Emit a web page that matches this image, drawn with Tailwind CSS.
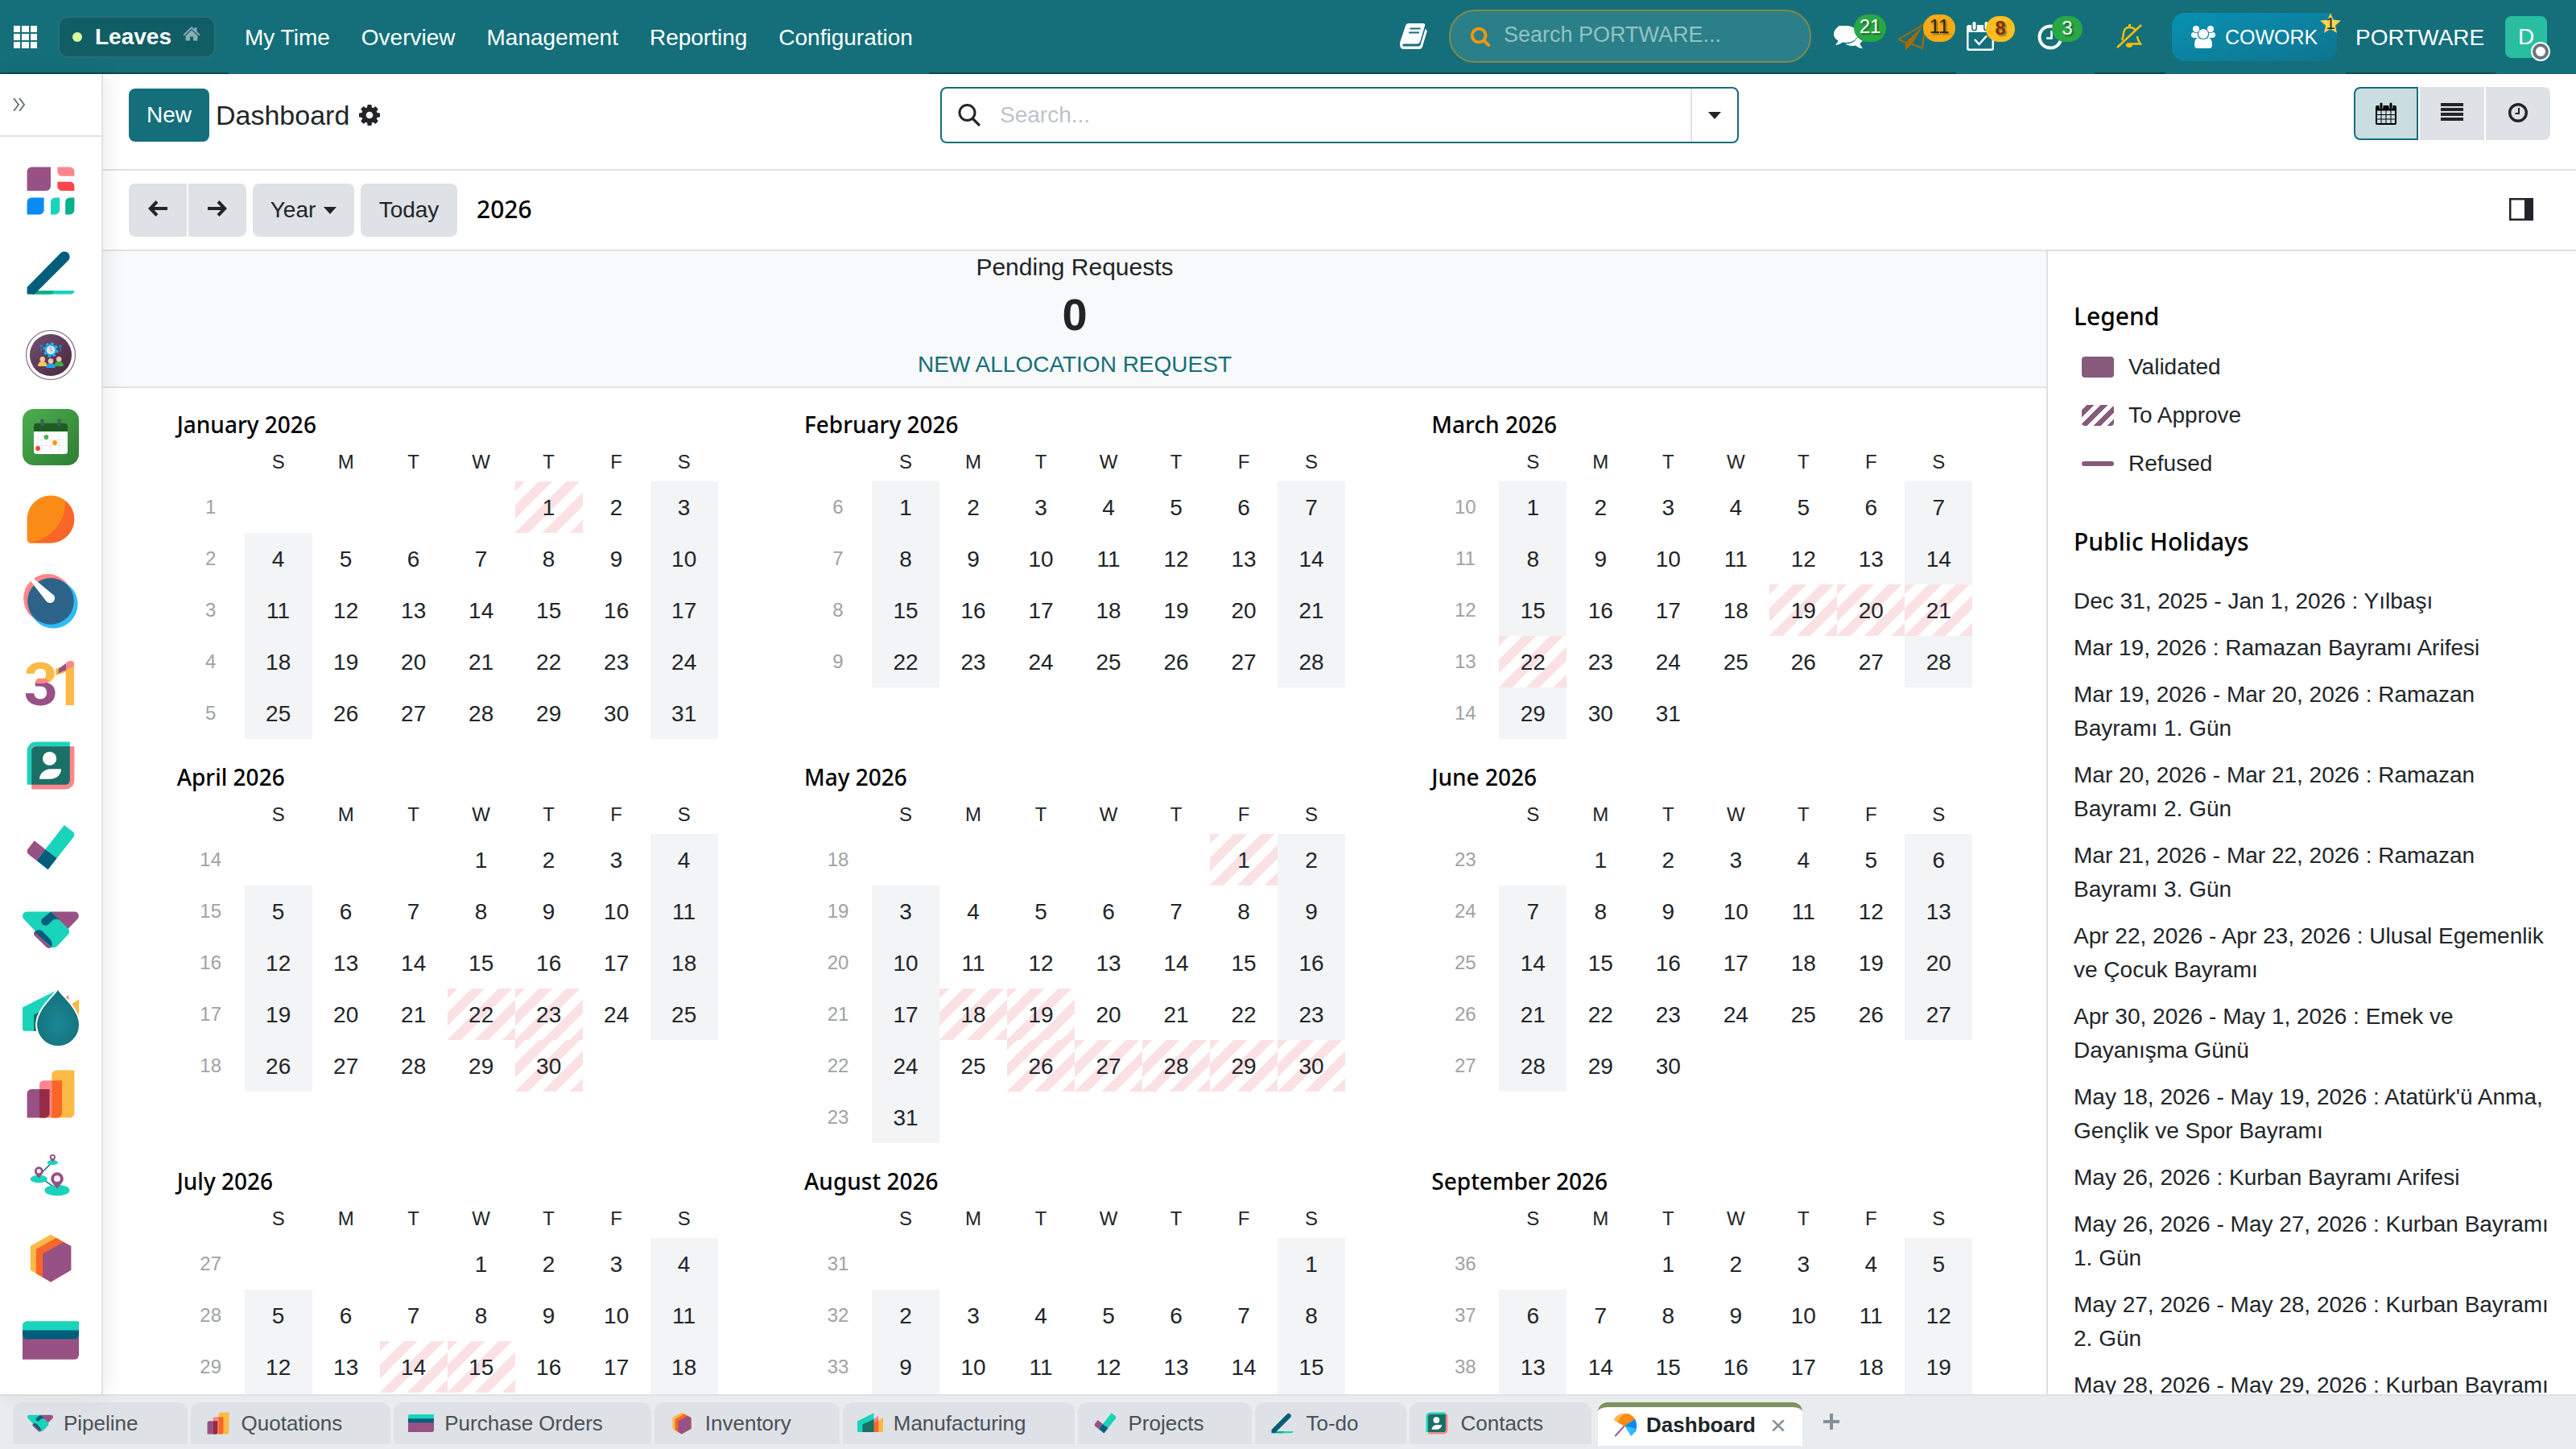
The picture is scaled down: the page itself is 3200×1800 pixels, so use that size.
<!DOCTYPE html>
<html lang="en">
<head>
<meta charset="utf-8">
<title>Leaves - Dashboard</title>
<script src="https://cdn.jsdelivr.net/npm/@tailwindcss/browser@4"></script>
</head>
<body class="h-screen flex flex-col overflow-hidden bg-white text-[28px] leading-[42px] text-[#212529] font-['Liberation_Sans',Arial,sans-serif]">

<svg class="absolute size-0" aria-hidden="true">
  <defs>
    <linearGradient id="g-plum" x1="0" y1="0" x2="1" y2="1"><stop offset="0" stop-color="#755070"/><stop offset="1" stop-color="#452640"/></linearGradient>
    <linearGradient id="g-green" x1="0" y1="0" x2="1" y2="1"><stop offset="0" stop-color="#4caf50"/><stop offset="1" stop-color="#2e7d32"/></linearGradient>
    <linearGradient id="g-three" gradientUnits="userSpaceOnUse" x1="0" y1="6" x2="0" y2="44"><stop offset=".48" stop-color="#fbb945"/><stop offset=".48" stop-color="#985184"/></linearGradient>
    <radialGradient id="g-drop" cx=".5" cy=".6" r=".6"><stop offset="0" stop-color="#1a8796"/><stop offset="1" stop-color="#146f7a"/></radialGradient>
    <clipPath id="c-dial"><circle cx="23" cy="23" r="22.3"/></clipPath>
  </defs>

  <symbol id="i-search" viewBox="0 0 1792 1792"><path fill="currentColor" d="M1216 832q0-185-131.500-316.500t-316.500-131.500-316.500 131.500-131.500 316.500 131.500 316.500 316.500 131.500 316.500-131.500 131.500-316.500zm512 832q0 52-38 90t-90 38q-54 0-90-38l-343-342q-179 124-399 124-143 0-273.500-55.500t-225-150-150-225-55.500-273.500 55.500-273.500 150-225 225-150 273.500-55.500 273.500 55.500 225 150 150 225 55.500 273.500q0 220-124 399l343 343q37 37 37 90z"/></symbol>

  <symbol id="app-dashboards" viewBox="0 0 50 50">
    <path fill="#985184" d="M8 4h17v17a4 4 0 0 1-4 4H4V8a4 4 0 0 1 4-4z"/>
    <path fill="#fc868b" d="M31 4h11a4 4 0 0 1 4 4v4H35a4 4 0 0 1-4-4z"/>
    <path fill="#f9464c" d="M31 17h11a4 4 0 0 1 4 4v4H35a4 4 0 0 1-4-4z"/>
    <path fill="#088bf5" d="M8 31h11v11a4 4 0 0 1-4 4H4V35a4 4 0 0 1 4-4z"/>
    <path fill="#1ad3bb" d="M29 31h4v11a4 4 0 0 1-4 4h-4V35a4 4 0 0 1 4-4z"/>
    <path fill="#05b08a" d="M42 31h4v11a4 4 0 0 1-4 4h-4V35a4 4 0 0 1 4-4z"/>
  </symbol>
  <symbol id="app-todo" viewBox="0 0 50 50">
    <path fill="#1ad3bb" d="M25 40.700h21a3.300 3.300 0 0 1-3.300 3.300H8z"/>
    <path fill="#05b08a" d="M10 40.700h18a3.300 3.300 0 0 1-3.300 3.300H8z"/>
    <path fill="#005e7a" d="M4 37.600 34.200 7A4.800 4.800 0 0 1 41 13.600L10.500 44H4z"/>
  </symbol>
  <symbol id="app-hr" viewBox="0 0 50 50">
    <circle cx="25" cy="25" r="21.800" fill="#fff" stroke="#7d5f7b" stroke-width=".8"/>
    <circle cx="25" cy="25" r="18.600" fill="url(#g-plum)"/>
    <circle cx="25" cy="20.500" r="5.600" fill="none" stroke="#18b4f2" stroke-width="2.200" stroke-dasharray="2.400 2"/>
    <circle cx="25" cy="20.500" r="5.200" fill="#18b4f2"/><circle cx="25" cy="20.500" r="3.800" fill="#dfe3e8"/>
    <path d="M25 18v2.600l1.600 1" fill="none" stroke="#7c8894" stroke-width=".7"/>
    <path d="M16.500 22.500v-6m-1.200 1.400 1.200-1.600 1.200 1.600M33.500 22.500v-6m-1.200 1.400 1.200-1.600 1.200 1.600" fill="none" stroke="#1c87c0" stroke-width=".9"/>
    <circle cx="17.700" cy="28.700" r="2.300" fill="#f3c7a2"/><circle cx="32.300" cy="28.700" r="2.300" fill="#f3c7a2"/>
    <path fill="#fdc653" d="M13.700 35c0-3 1.500-4.300 4-4.300s4 1.300 4 4.300z"/><path fill="#3fae49" d="M28.300 35c0-3 1.500-4.300 4-4.300s4 1.300 4 4.300z"/>
    <path fill="#18a5ec" d="M21 36.500c0-3 1.500-4.300 4-4.300s4 1.300 4 4.300z"/><circle cx="25" cy="30.300" r="2.300" fill="#f3c7a2"/>
  </symbol>
  <symbol id="app-planner" viewBox="0 0 50 50">
    <rect width="50" height="50" rx="10" fill="url(#g-green)"/>
    <rect x="10" y="12.400" width="30" height="27.600" rx="2.500" fill="#fff"/>
    <path fill="#1b5e20" d="M12.500 12.400h25a2.500 2.500 0 0 1 2.500 2.500V20H10v-5.100a2.500 2.500 0 0 1 2.500-2.500z"/>
    <path fill="#455a64" d="M16 9.500q1.500-1.300 3 0V15h-3zM31 9.500q1.500-1.300 3 0V15h-3z"/>
    <path stroke="#e3e5e7" stroke-width=".6" d="M12.500 27.500h25M12.500 32.500h25M17.500 22.500v15M25 22.500v15M32.500 22.500v15"/>
    <circle cx="21" cy="25" r="2.100" fill="#4caf50"/><circle cx="28.600" cy="30" r="2.100" fill="#ff9800"/><circle cx="13.600" cy="35" r="2.100" fill="#f44336"/>
  </symbol>
  <symbol id="app-discuss" viewBox="0 0 50 50">
    <path fill="#fa8b16" d="M4 25a21 21 0 1 1 21 21H7a3 3 0 0 1-3-3z"/>
    <path fill="#f96628" d="M37.900 8.600C38.500 30 22 44 6 45.800L7 46h18a21 21 0 0 0 12.900-37.400z"/>
  </symbol>
  <symbol id="app-timer" viewBox="0 0 50 50">
    <circle cx="22.400" cy="22.400" r="21.600" fill="#fc868b"/><circle cx="27.400" cy="27.400" r="21.600" fill="#2ebcfa"/>
    <circle cx="25" cy="24.900" r="20.600" fill="#2d6388"/>
    <path fill="#fff" d="M7.300 7.200 21 24.800a4.300 4.300 0 1 0 5-6.600L10 4.900z"/>
  </symbol>
  <symbol id="app-calendar" viewBox="0 0 50 50">
    <text x="1" y="44" font-family="Roboto" font-weight="700" font-size="53" fill="url(#g-three)">3</text>
    <text x="25" y="44" font-family="Roboto" font-weight="700" font-size="53" fill="#fbb945">1</text>
    <path fill="#985184" d="m31.500 16 .8-4.200 6.600-5.100V13z"/>
    <path fill="#fc868b" d="M38.900 6.500q7-4.500 7 3l-7 3.500zM12.500 25v-3q0-1.500 2-1.500h5l4 2-4 2.500z"/>
  </symbol>
  <symbol id="app-contacts" viewBox="0 0 50 50">
    <path fill="#1ad3bb" d="M12 4h30v38H4V12a8 8 0 0 1 8-8z"/>
    <path fill="#fc868b" d="M8 8h38v30a8 8 0 0 1-8 8H8z"/>
    <path fill="#1a6f66" d="M12 8h30v30a4 4 0 0 1-4 4H8V12a4 4 0 0 1 4-4z"/>
    <circle cx="24" cy="18.800" r="6.100" fill="#fff"/><path fill="#fff" d="M15 37c0-5 4.500-9 10-9h9.300c0 5-4.300 9-10 9z"/>
  </symbol>
  <symbol id="app-project" viewBox="0 0 50 50">
    <path fill="#985184" d="m10.500 18.800 9.700 7.600-7.800 10L5.500 31a3.800 3.800 0 0 1-.7-5z"/>
    <path fill="#1ad3bb" d="m37 5 7.500 5.800a3.800 3.800 0 0 1 .7 5L30.500 34.300l-10.300-7.900z"/>
    <path fill="#005e7a" d="m20.200 26.400 10.300 7.900-7.900 10.200-10.200-8.100z"/>
  </symbol>
  <symbol id="app-crm" viewBox="0 0 50 50">
    <path fill="#985184" d="M25 9h21c3.600 0 5.200 4 2.700 6.500l-8.400 8.800zM14 24.500 26 37l-1 4c-1.500.5-3 .2-4.200-1L11 30.300c-1.700-1.700-1.500-4.300 3-5.800z"/>
    <path fill="#1ad3bb" d="M4 9h21.200l15 15q2.600 2.700 0 5.400L31 39.200q-3.700 3.500-7.400 0L1.200 15.500C-1.300 13 .4 9 4 9z"/>
    <path fill="#985184" d="M10 27.500 25.500 40.500q-2.500 1.800-4.700-.5L11 30.300q-1.200-1.300-1-2.800z"/>
    <path fill="#005e7a" d="M25.200 9 33 16.300q-4-1.800-7.200 1l-2.500 2.700c-3.700 3.500-9-1.200-5.700-5zM11 27q2.500-3.500 6.500-.8l7 7q2.600 3.400 1.300 7.300z"/>
  </symbol>
  <symbol id="app-mfg" viewBox="0 0 50 50">
    <path fill="#fbb945" d="M50 14v26q0 2-2 2H34V24z"/>
    <path fill="#fc868b" d="M41 10v32H22V24z"/><path fill="#f96628" d="M41 18v24H31V26z"/>
    <path fill="#1ad3bb" d="M0 21 32 5v37H2q-2 0-2-2z"/>
    <path fill="#1a6f66" d="M10 27.500 32 17v25H10z"/>
  </symbol>
  <symbol id="app-sales" viewBox="0 0 50 50">
    <path fill="#985184" d="M8 20.700h16V42a4 4 0 0 1-4 4H4V24.700a4 4 0 0 1 4-4z"/>
    <path fill="#fc868b" d="M19 13h16v29a4 4 0 0 1-4 4H15V17a4 4 0 0 1 4-4z"/>
    <path fill="#fbb945" d="M30 4h16v38a4 4 0 0 1-4 4H26V8a4 4 0 0 1 4-4z"/>
    <path fill="#962b48" d="M15 20.700h9V42a4 4 0 0 1-4 4h-5z"/><path fill="#f96628" d="M26 13h9v29a4 4 0 0 1-4 4h-5z"/>
  </symbol>
  <symbol id="app-route" viewBox="0 0 50 50">
    <path stroke="#1d6e8a" stroke-width="1.100" d="m25 14-8 8M18 28l9 6"/>
    <g fill="#1ad3bb"><ellipse cx="26.700" cy="12.900" rx="4.700" ry="2.200"/><ellipse cx="14.500" cy="27.600" rx="7.600" ry="3.500"/><ellipse cx="30.700" cy="37.600" rx="11.100" ry="4.900"/></g>
    <g fill="none" stroke="#985184"><circle cx="26.700" cy="8.300" r="1.900" stroke-width="1.300"/><circle cx="14.500" cy="20.600" r="2.900" stroke-width="2.100"/><circle cx="30.700" cy="27.300" r="4.200" stroke-width="2.900"/></g>
    <path fill="#985184" d="m24.700 10 2 2.700 2-2.700zM11.300 22.700l3.200 4.300 3.200-4.300zM26.200 30.500l4.500 5.800 4.500-5.800z"/>
  </symbol>
  <symbol id="app-stock" viewBox="0 0 50 50">
    <path fill="#fbb945" d="M25 4 43 14.300v21.200L25 46 7 35.500V14.300z"/>
    <path fill="#f96628" d="M29.800 7 43 14.300v21.200L25 46l-13-7.500V17z"/>
    <path fill="#985184" d="m36 10.700 7 3.600v21.200L25 46l-7.100-4.200V21z"/>
  </symbol>
  <symbol id="app-purchase" viewBox="0 0 50 50">
    <path fill="#985184" d="M0 18h50v20a4 4 0 0 1-4 4H0z"/><path fill="#1ad3bb" d="M4 8h46v10H0v-6a4 4 0 0 1 4-4z"/>
    <path fill="#005e7a" d="M0 16h50v4a4 4 0 0 1-4 4H4a4 4 0 0 1-4-4z"/>
  </symbol>
  <symbol id="app-timeoff" viewBox="0 0 50 50">
    <path stroke="#985184" stroke-width="3" stroke-linecap="round" d="M6 46 27 23"/>
    <path fill="#fbb945" d="M3 16C5 8 13 3 22 3c6 0 10 3 11 6L17 25z"/>
    <path fill="#fa8b16" d="M28 3c8 1 14 6 17 13L28 31 11 20C15 10 19 4 28 3z"/>
    <path fill="#088bf5" d="M44 14c4 8 4 18 0 26L24 27z"/><path fill="#2ebcfa" d="M24 27 45 32c-1 7-5 12-9 15z"/>
  </symbol>
</svg>

<header class="flex h-[92px] shrink-0 bg-[#146f7a] text-white whitespace-nowrap">
  <div class="flex items-center w-[284px] pl-[17px] pt-[2px] border-b-2 border-[#0c4951]">
    <button aria-label="Apps" class="grid grid-cols-3 gap-[2px] w-[29px] h-[28px]">
      <span class="bg-white"></span><span class="bg-white"></span><span class="bg-white"></span><span class="bg-white"></span><span class="bg-white"></span><span class="bg-white"></span><span class="bg-white"></span><span class="bg-white"></span><span class="bg-white"></span>
    </button>
    <a href="#" class="flex items-center h-[52px] w-[196px] ml-[26px] pl-4 rounded-xl bg-[#115d66] border-2 border-white/10 font-bold">
      <span class="size-3 rounded-full bg-[#d9f99d] mr-4"></span>Leaves
      <svg class="w-[22px] h-[18px] ml-[14px] mb-2 text-white/50" viewBox="0 0 22 18"><path fill="currentColor" d="M11 0 14.500 3.300V1.300h3v4.900L21.500 10l-1.300 1.400L11 2.800 1.800 11.400.5 10zM11 4.400l7.400 7V17.500h-5.400v-5H9v5H3.600v-6.100z"/></svg>
    </a>
  </div>
  <nav class="flex items-center pt-1 border-b-2 border-transparent">
    <a href="#" class="px-5">My Time</a><a href="#" class="px-[19px]">Overview</a><a href="#" class="px-5">Management</a><a href="#" class="px-[19px]">Reporting</a><a href="#" class="px-5">Configuration</a>
  </nav>
  <div class="flex flex-1 items-center justify-end border-b-2 border-[#0c4951] pr-px">
    <button aria-label="Knowledge" class="mr-[27px]">
      <svg class="w-[34px] h-8" viewBox="0 0 34 32"><path fill="#fff" d="M11 0h18q3 0 2 3l-6 20q-1 2.500-3.500 2.500H5q-1.800 0-1.800 1.500T5 28.500h18q2 0 2.600-2L31.500 7q2.800 1 1.800 4L28 29q-1 3-4 3H5q-5 0-5-6Q0 23.500 1 21L7 3q1-3 4-3z"/><path stroke="#146f7a" stroke-width="2" d="M12.500 6.500h13M11 11.500h13"/></svg>
    </button>
    <label class="flex items-center w-[450px] h-[66px] pl-6 pr-4 gap-4 rounded-4xl bg-[#2b7f88] border-2 border-[#80894f]">
      <svg class="size-[26px] shrink-0 text-[#ff9800]"><use href="#i-search"/></svg>
      <input type="search" aria-label="Search PORTWARE" placeholder="Search PORTWARE..." class="flex-1 min-w-0 pb-1 bg-transparent outline-none text-[27px] placeholder:text-[#93c2c6]">
    </label>
    <button aria-label="Messages" class="relative w-[65px] h-9 ml-7">
      <svg class="w-[38px] h-8 mt-1" viewBox="0 0 38 32"><path fill="#fff" d="M15 1c8.300 0 15 4.700 15 10.500S23.300 22 15 22q-2 0-4-.4Q7.500 24.500 3 25q-1 0-.5-1Q5 22 5.500 19.500 0 16.500 0 11.500 0 5.700 6.700 1z"/><path fill="#fff" d="M32 8q5 3 5 7.500 0 4.700-4.500 7.200.5 3.300 3 5.500.3 1-.6 1-4.400-.5-8-3.700-6.500 1.700-13-2Q29 24 32 8z"/></svg>
      <span class="absolute right-0 -top-[9px] w-10 h-[34px] rounded-full bg-[#28a745] text-[24px] leading-[30px] text-center text-shadow-[2px_2px_2px_#00000066]">21</span>
    </button>
    <button aria-label="Shipments" class="relative w-[72px] h-9 ml-[14px]">
      <svg class="w-9 h-9" viewBox="0 0 36 36"><path fill="none" stroke="#a76a05" stroke-width="2" stroke-linejoin="round" d="M1.500 22 35 2l-4 31-12-5-1 1M1.500 22l9 4"/><path fill="#a76a05" d="M31 6 10 25.500v10L19 27z"/></svg>
      <span class="absolute right-0 -top-[9px] w-10 h-[34px] rounded-full bg-[#f6ab16] text-[#212529] text-[24px] leading-[30px] text-center text-shadow-[2px_2px_2px_#00000066]">11</span>
    </button>
  </div>
  <div class="flex items-center gap-7 w-[172px] pl-[13px] border-b-2 border-transparent">
    <button aria-label="Activities" class="relative w-[60px] h-9">
      <svg class="w-[34px] h-9" viewBox="0 0 34 36"><path fill="#fff" fill-rule="evenodd" d="M3 4h28q3 0 3 3v26q0 3-3 3H3q-3 0-3-3V7q0-3 3-3zm-.500 9v19.500q0 1 1 1h27q1 0 1-1V13z"/><path stroke="#146f7a" stroke-width="7" stroke-linecap="round" d="M9.500 3v5M24.500 3v5"/><path stroke="#fff" stroke-width="4" stroke-linecap="round" d="M9.500 2v6M24.500 2v6"/><path fill="none" stroke="#fff" stroke-width="2.500" d="m10 22 5.500 6L25 17.500"/></svg>
      <span class="absolute right-0 -top-[7px] w-9 h-8 rounded-full bg-[#fbbf24] text-[#78350f] text-[24px] leading-[30px] font-bold text-center text-shadow-[2px_2px_2px_#00000066]">8</span>
    </button>
    <button aria-label="Timesheet" class="relative w-14 h-9">
      <svg class="size-8 mt-[2px]" viewBox="0 0 32 32"><circle cx="16" cy="16" r="13.500" fill="none" stroke="#fff" stroke-width="4"/><path fill="none" stroke="#fff" stroke-width="2.600" d="M17.500 8v9.500H11"/></svg>
      <span class="absolute right-0 -top-[7px] w-[38px] h-8 rounded-full bg-[#28a745] text-[24px] leading-[30px] text-center text-shadow-[2px_2px_2px_#00000066]">3</span>
    </button>
  </div>
  <div class="flex items-center w-[88px] pl-[27px] border-b-2 border-[#0c4951]">
    <button aria-label="Notifications muted">
      <svg class="w-8 h-[30px]" viewBox="0 0 32 30"><path fill="none" stroke="#ffc107" stroke-width="2.400" d="M1 29 31 1M7 20q2-5 2-9Q10 4 16 4t8 4M26 15q0 4 4 9.500H13"/><path fill="#ffc107" d="M11.500 25h9q-.5 4-4.500 4-4 0-4.500-4zM15 0h3v4h-3z"/></svg>
    </button>
  </div>
  <div class="flex items-center pl-2 pr-[11px] pt-[2px] border-b-2 border-transparent">
    <button class="relative flex items-center w-[205px] h-[60px] pl-6 gap-3 rounded-2xl bg-linear-to-br from-[#0891b2] to-[#0e7490] text-[25px]">
      <svg class="w-[30px] h-7" viewBox="0 0 30 28"><g fill="#fff"><circle cx="6" cy="4" r="4"/><circle cx="24" cy="4" r="4"/><circle cx="15" cy="10" r="6"/><path d="M3 8q2 1.500 5 .6-.8 4 1.700 6.400H4q-4 0-4-3.500Q0 8 3 8zM27 8q-2 1.500-5 .6.800 4-1.700 6.400H26q4 0 4-3.500Q30 8 27 8zM8.500 15q6.500 4 13 0 4.500.5 4.500 9 0 4-4 4H8q-4 0-4-4 0-8.500 4.500-9z"/></g></svg>
      COWORK
      <span class="absolute -right-[6px] -top-[1px] grid place-items-center w-7 h-7 text-[20px] leading-6 text-[#212529]">
        <svg class="absolute inset-0 size-7" viewBox="0 0 28 28"><path fill="#ffd54f" d="m14 1 3.600 8.700 9.400.8-7.100 6.200 2.100 9.300-8-5-8 5 2.100-9.300L1 10.500l9.400-.8z"/></svg>
        <span class="relative">1</span>
      </span>
    </button>
  </div>
  <div class="flex items-center w-[186px] pl-3 pt-1 border-b-2 border-[#0c4951]"><a href="#">PORTWARE</a></div>
  <div class="flex items-center w-[100px] pl-3 pt-[2px] border-b-2 border-transparent">
    <button aria-label="User menu" class="relative size-[52px] rounded-lg bg-[#28be9f]">D
      <span class="absolute -right-1 -bottom-1 size-6 rounded-full border-2 border-white bg-[#6c757d] p-1"><span class="block size-3 rounded-full bg-white"></span></span>
    </button>
  </div>
</header>

<div class="flex flex-1 min-h-0">
  <aside class="relative z-10 w-32 shrink-0 bg-white border-r-2 border-[#dee2e6] shadow-[4px_0_24px_#00000014]">
    <button aria-label="Expand sidebar" class="flex items-center w-full h-[78px] pl-4 border-b-2 border-[#dee2e6]">
      <svg class="size-4" viewBox="0 0 16 16"><path fill="none" stroke="#6c757d" stroke-width="2" d="m1 0 6 8-6 8M8 0l6 8-6 8"/></svg>
    </button>
    <nav class="flex flex-col items-center pt-4 *:flex *:items-center *:h-[102px] [&_svg]:size-[70px] [&_svg]:overflow-visible">
      <a href="#" aria-label="Dashboards"><svg><use href="#app-dashboards"/></svg></a>
      <a href="#" aria-label="To-do"><svg><use href="#app-todo"/></svg></a>
      <a href="#" aria-label="HR"><svg><use href="#app-hr"/></svg></a>
      <a href="#" aria-label="Planner"><svg><use href="#app-planner"/></svg></a>
      <a href="#" aria-label="Discuss"><svg><use href="#app-discuss"/></svg></a>
      <a href="#" aria-label="Timer"><svg><use href="#app-timer"/></svg></a>
      <a href="#" aria-label="Calendar"><svg><use href="#app-calendar"/></svg></a>
      <a href="#" aria-label="Contacts"><svg><use href="#app-contacts"/></svg></a>
      <a href="#" aria-label="Projects"><svg><use href="#app-project"/></svg></a>
      <a href="#" aria-label="CRM"><svg><use href="#app-crm"/></svg></a>
      <a href="#" aria-label="Manufacturing"><svg viewBox="0 0 50 50"><use href="#app-mfg" width="50" height="50"/><path fill="url(#g-drop)" stroke="#fff" stroke-width="1.400" d="M31.400 4.300C34 10 50.700 22 50.700 36.500a19.200 19.200 0 0 1-38.500 0C12.200 22 28.800 10 31.400 4.300z"/></svg></a>
      <a href="#" aria-label="Sales"><svg><use href="#app-sales"/></svg></a>
      <a href="#" aria-label="Routes"><svg><use href="#app-route"/></svg></a>
      <a href="#" aria-label="Inventory"><svg><use href="#app-stock"/></svg></a>
      <a href="#" aria-label="Purchase"><svg><use href="#app-purchase"/></svg></a>
    </nav>
  </aside>

  <main class="flex flex-1 flex-col min-w-0">
    <div class="grid grid-cols-[1fr_auto_1fr] items-start h-[120px] shrink-0 pt-4 px-8 border-b-2 border-[#dee2e6]">
      <div class="flex items-center gap-2 h-[70px]">
        <button class="w-[100px] h-[66px] rounded-lg bg-[#146f7a] text-white">New</button>
        <h1 class="text-[34px]">Dashboard</h1>
        <button aria-label="Actions" class="ml-1"><svg class="size-[26px]" viewBox="128 128 1536 1536"><path fill="#212529" d="M1152 896q0-106-75-181t-181-75-181 75-75 181 75 181 181 75 181-75 75-181zm512-109v222q0 12-8 23t-20 13l-185 28q-19 54-39 91 35 50 107 138 10 12 10 25t-9 23q-27 37-99 108t-94 71q-12 0-26-9l-138-108q-44 23-91 38-16 136-29 186-7 28-36 28h-222q-14 0-24.500-8.500t-11.500-21.500l-28-184q-49-16-90-37l-141 107q-10 9-25 9-14 0-25-11-126-114-165-168-7-10-7-23 0-12 8-23 15-21 51-66.500t54-70.500q-27-50-41-99l-183-27q-13-2-21-12.500t-8-23.500v-222q0-12 8-23t19-13l186-28q14-46 39-92-40-57-107-138-10-12-10-24 0-10 9-23 26-36 98.500-107.500t94.500-71.500q13 0 26 10l138 107q44-23 91-38 16-136 29-186 7-28 36-28h222q14 0 24.500 8.500t11.500 21.500l28 184q49 16 90 37l142-107q9-9 24-9 13 0 25 10 129 119 165 170 7 8 7 22 0 12-8 23-15 21-51 66.500t-54 70.500q26 50 41 98l183 28q13 2 21 12.500t8 23.500z"/></svg></button>
      </div>
      <div class="flex w-[992px] h-[70px] border-2 border-[#146f7a] rounded-lg">
        <label class="flex flex-1 items-center pl-5 gap-6">
          <svg class="size-7 shrink-0" viewBox="0 0 28 28"><circle cx="11.500" cy="11" r="9.500" fill="none" stroke="#212529" stroke-width="3"/><path stroke="#212529" stroke-width="3.200" d="m18 18 9 9"/></svg>
          <input type="search" aria-label="Search" placeholder="Search..." class="flex-1 min-w-0 outline-none placeholder:text-[#bcc3ca]">
        </label>
        <button aria-label="Search options" class="grid place-items-center w-[58px] border-l-2 border-[#dee2e6]"><svg class="w-4 h-[9px]" viewBox="0 0 16 9"><path fill="#212529" d="M0 0h16L8 9z"/></svg></button>
      </div>
      <div class="flex justify-end gap-[2px] h-[66px]">
        <button aria-label="Calendar view" class="grid place-items-center w-20 rounded-l-lg bg-[#cadee1] border-2 border-[#146f7a]"><svg class="size-7" viewBox="0 0 28 28"><path fill="#000" fill-rule="evenodd" d="M3 4h22q2 0 2 2v20q0 2-2 2H3q-2 0-2-2V6q0-2 2-2zm0 6.500V15h4.500v-4.500zm5.500 0V15h5v-4.500zm6 0V15h5v-4.500zm6 0V15H25v-4.500zM3 16v4.500h4.500V16zm5.500 0v4.500h5V16zm6 0v4.500h5V16zm6 0v4.500H25V16zM3 21.500V26h4.500v-4.500zm5.500 0V26h5v-4.500zm6 0V26h5v-4.500zm6 0V26H25v-4.500z"/><path stroke="#cadee1" stroke-width="5" stroke-linecap="round" d="M8 3v3M20 3v3"/><path stroke="#000" stroke-width="3" stroke-linecap="round" d="M8 2v5M20 2v5"/></svg></button>
        <button aria-label="List view" class="grid place-items-center w-20 bg-[#dee2e6] pb-1"><svg class="w-7 h-[22px]" viewBox="0 0 28 22"><path fill="#212529" d="M0 0h28v4H0zM0 6h28v4H0zM0 12h28v4H0zM0 18h28v4H0z"/></svg></button>
        <button aria-label="Activity view" class="grid place-items-center w-20 rounded-r-lg bg-[#dee2e6] pb-[2px]"><svg class="size-6" viewBox="0 0 24 24"><circle cx="12" cy="12" r="10.300" fill="none" stroke="#212529" stroke-width="3.400"/><path fill="none" stroke="#212529" stroke-width="2" d="M13 6v7H8.500"/></svg></button>
      </div>
    </div>

    <div class="flex items-start h-[100px] shrink-0 px-8 pt-4 border-b-2 border-[#dee2e6]">
      <div class="flex gap-[2px] h-[66px]">
        <button aria-label="Previous" class="grid place-items-center w-[72px] rounded-l-lg bg-[#dee2e6] pb-1"><svg class="w-6 h-5" viewBox="0 0 24 20"><path fill="none" stroke="#212529" stroke-width="4" d="M24 10H3M11 1.500 2.800 10l8.200 8.500"/></svg></button>
        <button aria-label="Next" class="grid place-items-center w-[72px] rounded-r-lg bg-[#dee2e6] pb-1"><svg class="w-6 h-5" viewBox="0 0 24 20"><path fill="none" stroke="#212529" stroke-width="4" d="M0 10h21M13 1.500l8.200 8.500-8.200 8.500"/></svg></button>
      </div>
      <button class="flex items-center justify-center gap-[10px] w-[126px] h-[66px] ml-2 rounded-lg bg-[#dee2e6]">Year<svg class="w-4 h-[9px]" viewBox="0 0 16 9"><path fill="#212529" d="M0 0h16L8 9z"/></svg></button>
      <button class="w-[120px] h-[66px] ml-2 rounded-lg bg-[#dee2e6]">Today</button>
      <h2 class="ml-6 text-[30px] leading-[64px] font-medium text-black font-['Noto_Sans',sans-serif]">2026</h2>
      <button aria-label="Toggle side panel" class="ml-auto mr-[21px] h-16"><svg class="w-[30px] h-7" viewBox="0 0 30 28"><path fill="#212529" fill-rule="evenodd" d="M0 0h30v28H0zm2.500 2.500v23H19v-23z"/></svg></button>
    </div>

    <div class="flex flex-1 min-h-0">
      <section class="flex flex-1 flex-col min-w-0">
        <div class="flex flex-col items-center h-[170px] shrink-0 bg-[#f8f9fa] border-b-2 border-[#dee2e6]">
          <h3 class="text-[30px] leading-10">Pending Requests</h3>
          <span class="text-[56px] leading-[78px] font-bold">0</span>
          <a href="#" class="leading-[46px] text-[#146f7a]">NEW ALLOCATION REQUEST</a>
        </div>
        <div id="year" class="grid grid-cols-3 items-start content-start flex-1 min-h-0 overflow-hidden px-[38px]"></div>
      </section>

      <aside class="w-[658px] shrink-0 overflow-hidden border-l-2 border-[#dee2e6] px-8 pt-[60px]">
        <h3 class="text-[30px] font-medium text-black font-['Noto_Sans',sans-serif]">Legend</h3>
        <ul class="pt-3 *:flex *:items-center *:gap-[18px] *:h-[60px] *:pl-[10px]">
          <li><span class="w-10 h-[26px] rounded bg-[#875a7b]"></span>Validated</li>
          <li><span class="w-10 h-[26px] rounded bg-[repeating-linear-gradient(-45deg,#875a7b_0_6px,#fff_6px_12px)]"></span>To Approve</li>
          <li><span class="w-10 h-[6px] rounded bg-[#875a7b]"></span>Refused</li>
        </ul>
        <h3 class="pt-[46px] text-[30px] font-medium text-black font-['Noto_Sans',sans-serif]">Public Holidays</h3>
        <div class="flex flex-col gap-4 pt-8">
          <p>Dec 31, 2025 - Jan 1, 2026 : Yılbaşı</p>
          <p>Mar 19, 2026 : Ramazan Bayramı Arifesi</p>
          <p>Mar 19, 2026 - Mar 20, 2026 : Ramazan Bayramı 1. Gün</p>
          <p>Mar 20, 2026 - Mar 21, 2026 : Ramazan Bayramı 2. Gün</p>
          <p>Mar 21, 2026 - Mar 22, 2026 : Ramazan Bayramı 3. Gün</p>
          <p>Apr 22, 2026 - Apr 23, 2026 : Ulusal Egemenlik ve Çocuk Bayramı</p>
          <p>Apr 30, 2026 - May 1, 2026 : Emek ve Dayanışma Günü</p>
          <p>May 18, 2026 - May 19, 2026 : Atatürk'ü Anma, Gençlik ve Spor Bayramı</p>
          <p>May 26, 2026 : Kurban Bayramı Arifesi</p>
          <p>May 26, 2026 - May 27, 2026 : Kurban Bayramı 1. Gün</p>
          <p>May 27, 2026 - May 28, 2026 : Kurban Bayramı 2. Gün</p>
          <p>May 28, 2026 - May 29, 2026 : Kurban Bayramı</p>
        </div>
      </aside>
    </div>
  </main>
</div>

<footer class="flex items-start gap-1 h-[68px] shrink-0 pt-2 pl-4 border-t-2 border-[#dee2e6] bg-[#e9ecef] text-[26px] text-[#495057] whitespace-nowrap [&_svg]:size-8">
  <a href="#" class="flex items-center gap-[13px] h-[52px] pl-[18px] pr-[61px] rounded-t-xl bg-[#dee2e6]"><svg><use href="#app-crm"/></svg>Pipeline</a>
  <a href="#" class="flex items-center gap-[13px] h-[52px] pl-[18px] pr-[60px] rounded-t-xl bg-[#dee2e6]"><svg><use href="#app-sales"/></svg>Quotations</a>
  <a href="#" class="flex items-center gap-[13px] h-[52px] pl-[18px] pr-[60px] rounded-t-xl bg-[#dee2e6]"><svg><use href="#app-purchase"/></svg>Purchase Orders</a>
  <a href="#" class="flex items-center gap-[13px] h-[52px] pl-[18px] pr-[60px] rounded-t-xl bg-[#dee2e6]"><svg><use href="#app-stock"/></svg>Inventory</a>
  <a href="#" class="flex items-center gap-[13px] h-[52px] pl-[18px] pr-[60px] rounded-t-xl bg-[#dee2e6]"><svg><use href="#app-mfg"/></svg>Manufacturing</a>
  <a href="#" class="flex items-center gap-[13px] h-[52px] pl-[18px] pr-[60px] rounded-t-xl bg-[#dee2e6]"><svg><use href="#app-project"/></svg>Projects</a>
  <a href="#" class="flex items-center gap-[13px] h-[52px] pl-[18px] pr-[60px] rounded-t-xl bg-[#dee2e6]"><svg><use href="#app-todo"/></svg>To-do</a>
  <a href="#" class="flex items-center gap-[13px] h-[52px] pl-[18px] pr-[60px] rounded-t-xl bg-[#dee2e6]"><svg><use href="#app-contacts"/></svg>Contacts</a>
  <div class="flex items-center gap-3 h-[54px] ml-1 pl-[18px] pr-[14px] rounded-t-xl bg-white border-t-[6px] border-[#7f915c] pb-1 text-[#212529]">
    <a href="#" class="flex items-center gap-[10px] font-bold"><svg><use href="#app-timeoff"/></svg>Dashboard</a>
    <button aria-label="Close tab" class="grid place-items-center size-8"><span class="text-[34px] leading-8 text-[#868e96]">×</span></button>
  </div>
  <button aria-label="New tab" class="grid place-items-center h-[48px] w-16"><span class="relative block size-5"><span class="absolute inset-x-0 top-2 h-1 bg-[#868e96]"></span><span class="absolute inset-y-0 left-2 w-1 bg-[#868e96]"></span></span></button>
</footer>

<script>
  const names = ['January', 'February', 'March', 'April', 'May', 'June', 'July', 'August', 'September'];
  const holidays = { 0: [1], 2: [19, 20, 21, 22], 3: [22, 23, 30], 4: [1, 18, 19, 26, 27, 28, 29, 30], 6: [14, 15] };
  const firstSunday = Date.UTC(2025, 11, 28);
  const DAY = 86400000;
  const year = document.getElementById('year');

  function cell(month, day, column) {
    if (!day) return '<td></td>';
    if ((holidays[month] || []).includes(day)) {
      return `<td data-label="${day}" class="pt-[2px] bg-[repeating-linear-gradient(-45deg,#fae2e4_0_12px,#fff_12px_24px)]"></td>`;
    }
    return column === 0 || column === 6
      ? `<td data-label="${day}" class="pt-[2px] bg-[#f3f4f6]"></td>`
      : `<td data-label="${day}" class="pt-[2px]"></td>`;
  }

  year.innerHTML = names.map((name, month) => {
    const first = Date.UTC(2026, month, 1);
    const offset = new Date(first).getUTCDay();
    const days = new Date(Date.UTC(2026, month + 1, 0)).getUTCDate();
    let rows = '';
    for (let start = 1 - offset; start <= days; start += 7) {
      const week = (first + (start - 1) * DAY - firstSunday) / DAY / 7 + 1;
      let cells = '';
      for (let c = 0; c < 7; c++) {
        const d = start + c;
        cells += cell(month, d >= 1 && d <= days ? d : 0, c);
      }
      rows += `<tr class="h-16"><th data-label="${week}" class="text-[24px] font-normal text-[#a0a2a4]"></th>${cells}</tr>`;
    }
    const heads = ['', 'S', 'M', 'T', 'W', 'T', 'F', 'S'].map(h => `<th class="font-normal">${h}</th>`).join('');
    return `<section class="w-[672px] justify-self-center pt-[22px] pb-[2px]">
      <h3 class="text-[28px] leading-[46px] font-medium text-black font-['Noto_Sans',sans-serif]">${name} 2026</h3>
      <table class="w-full table-fixed text-center"><thead><tr class="h-12 text-[24px]">${heads}</tr></thead><tbody>${rows}</tbody></table>
    </section>`;
  }).join('');

  // Fill in the numbers of the weeks that are in view.
  function fillVisibleWeeks() {
    const bottom = year.getBoundingClientRect().bottom;
    year.querySelectorAll('tbody tr').forEach(row => {
      const inView = row.getBoundingClientRect().top + 16 < bottom;
      row.querySelectorAll('[data-label]').forEach(c => { c.textContent = inView ? c.dataset.label : ''; });
    });
  }
  fillVisibleWeeks();
  addEventListener('load', fillVisibleWeeks);
  addEventListener('resize', fillVisibleWeeks);
  year.addEventListener('scroll', fillVisibleWeeks);
</script>
</body>
</html>
